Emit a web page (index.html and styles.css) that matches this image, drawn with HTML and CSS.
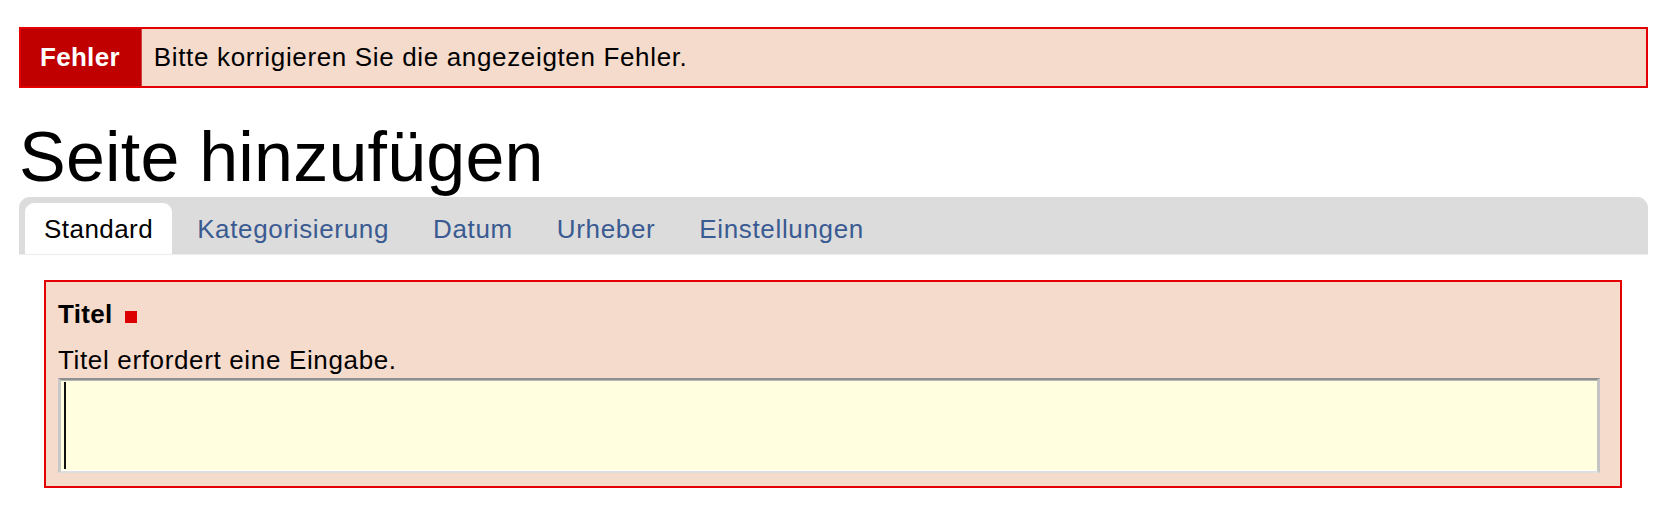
FILE: index.html
```html
<!DOCTYPE html>
<html lang="de">
<head>
<meta charset="utf-8">
<title>Seite hinzufügen</title>
<link rel="stylesheet" href="styles.css">
</head>
<body>
  <dl class="portal-message">
    <dt class="portal-message__label">Fehler</dt>
    <dd class="portal-message__text">Bitte korrigieren Sie die angezeigten Fehler.</dd>
  </dl>

  <h1 class="page-title">Seite hinzufügen</h1>

  <nav class="tabs">
    <a class="tab tab--active" href="#">Standard</a>
    <a class="tab" href="#">Kategorisierung</a>
    <a class="tab" href="#">Datum</a>
    <a class="tab" href="#">Urheber</a>
    <a class="tab" href="#">Einstellungen</a>
  </nav>

  <div class="tab-panel">
    <div class="field field--error">
      <label class="field__label" for="title">Titel <span class="required"></span></label>
      <div class="field__error">Titel erfordert eine Eingabe.</div>
      <div class="field__input-wrap">
        <input class="field__input" id="title" type="text" value="">
        <span class="field__caret"></span>
      </div>
    </div>
  </div>
</body>
</html>
```

FILE: styles.css
```css
html, body {
  margin: 0;
  padding: 0;
  background: #ffffff;
}

body {
  padding: 27px 19px 0 19px;
  font-family: "Liberation Sans", Arial, Helvetica, sans-serif;
  font-size: 26px;
  letter-spacing: 0.65px;
  color: #000000;
}

/* Error message bar */
.portal-message {
  display: flex;
  margin: 0;
  height: 57px;
  border: 2px solid #e20000;
  background: #f5dbcc;
}

.portal-message__label {
  display: flex;
  align-items: center;
  margin: 0;
  padding: 0 21px 0 19px;
  background: #c00000;
  color: #ffffff;
  font-weight: bold;
  letter-spacing: 0.3px;
  border-right: 1px solid #d04040;
}

.portal-message__text {
  display: flex;
  align-items: center;
  margin: 0;
  padding-left: 12px;
}

/* Heading */
.page-title {
  margin: 29px 0 0 0;
  font-size: 70px;
  font-weight: normal;
  line-height: 80px;
  letter-spacing: 0.2px;
}

/* Tabs */
.tabs {
  display: flex;
  gap: 6px;
  height: 51px;
  padding: 6px 6px 0 6px;
  background: #dcdcdc;
  border-radius: 11px 11px 0 0;
  border-bottom: 1px solid #ececec;
}

.tab {
  display: block;
  padding: 3px 19px 1px 19px;
  line-height: 47px;
  color: #3a5a92;
  text-decoration: none;
  letter-spacing: 0.65px;
  border-radius: 9px 9px 0 0;
}

.tab--active {
  background: #ffffff;
  color: #000000;
  letter-spacing: 0.45px;
}

/* Panel */
.tab-panel {
  padding: 25px 26px 0 25px;
}

.field--error {
  border: 2px solid #e20000;
  background: #f5dbcc;
  padding: 17px 20px 13px 12px;
}

.field__label {
  display: block;
  font-weight: bold;
  line-height: 30px;
  letter-spacing: 0.3px;
}

.required {
  display: inline-block;
  width: 12px;
  height: 12px;
  margin-left: 5px;
  background: #dd0000;
  vertical-align: baseline;
}

.field__error {
  margin-top: 16px;
  line-height: 30px;
}

.field__input-wrap {
  position: relative;
  margin-top: 3px;
}

.field__input {
  display: block;
  box-sizing: border-box;
  width: 100%;
  height: 95px;
  margin: 0;
  padding: 0 4px;
  background: #ffffe0;
  border-style: solid;
  border-width: 2px 3px 2px 3px;
  border-color: #8f8f8f #c4c4c4 #dedede #c8c8c8;
  box-shadow: inset 0 1px 0 #b8b8b8, inset 0 -1px 0 #ffffff;
  font-family: inherit;
  font-size: 26px;
  outline: none;
}

.field__caret {
  position: absolute;
  left: 6px;
  top: 4px;
  bottom: 4px;
  width: 2px;
  background: #111111;
}
```
